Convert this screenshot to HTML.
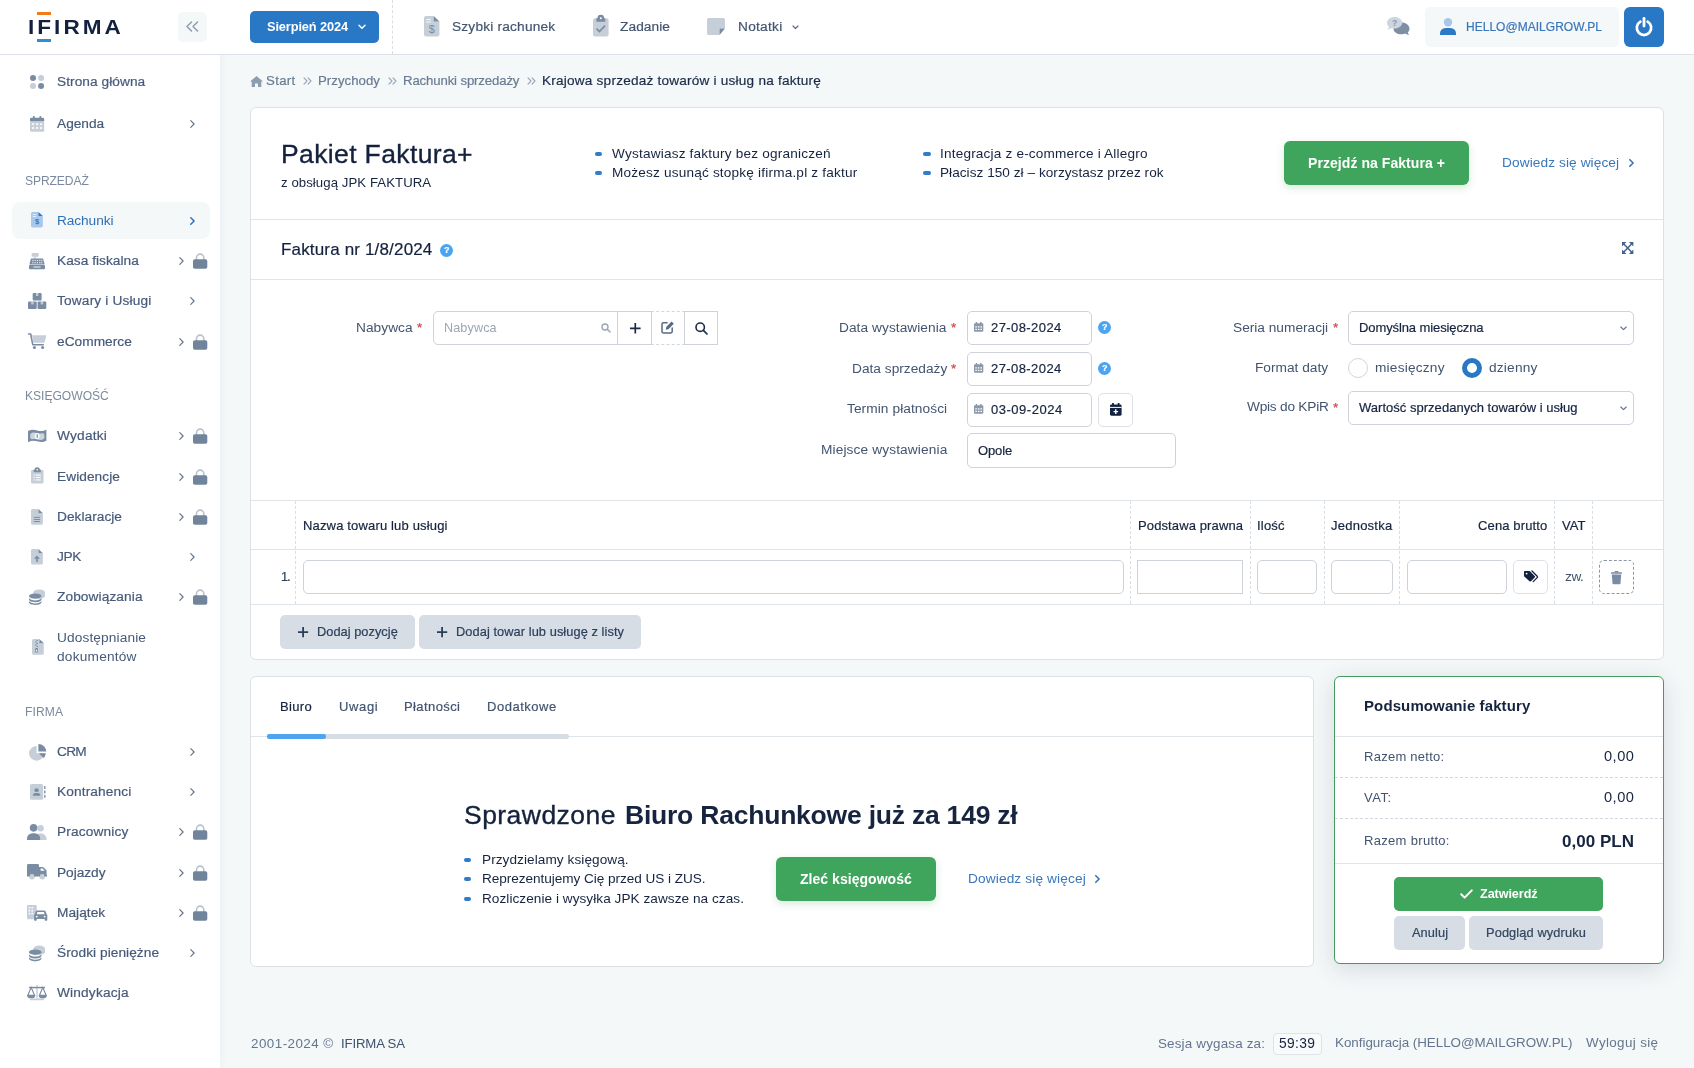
<!DOCTYPE html>
<html lang="pl"><head><meta charset="utf-8"><title>ifirma - faktura</title><style>
*{box-sizing:border-box;margin:0;padding:0}
html,body{width:1694px;height:1068px;overflow:hidden}
body{background:#f5f8f9;font-family:"Liberation Sans",sans-serif;color:#16243f;font-size:14px;position:relative}
.a{position:absolute;white-space:nowrap;will-change:transform}
.m5{-webkit-text-stroke:.2px}
.m4{-webkit-text-stroke:.35px}
.b{position:absolute}
svg{position:absolute;overflow:visible}
aside,header,nav,main,section,footer{display:block;position:static;height:0}
.card{position:absolute;background:#fff;border:1px solid #dde1e6;border-radius:6px}
.hl{position:absolute;height:1px;background:#dfe4e9}
.vd{position:absolute;width:0;border-left:1px dashed #d9dee4}
.inp{position:absolute;background:#fff;border:1px solid #cdd3d9;border-radius:5px}
</style></head><body>
<aside class="sidebar">
<div class="b" style="left:0;top:0;width:220px;height:1068px;background:#fff;box-shadow:0 0 10px rgba(40,60,90,.05)"></div>
<div class="b" style="left:220px;top:0;width:1474px;height:54px;background:#fff"></div>
<div class="hl" style="left:0;top:54px;width:1694px;background:#dce2e8"></div>
<div class="b" style="left:37px;top:11.700px;width:13.700px;height:3px;background:#ee7d1a"></div>
<div class="b" style="left:37px;top:38.700px;width:13.700px;height:3px;background:#2c8fd6"></div>
<div class="a" style="top:16.3px;line-height:22px;font-size:19.8px;color:#12213f;font-weight:700;letter-spacing:2.662px;left:28.3px;transform:scaleX(1.14);transform-origin:0 50%;">IFIRMA</div>
<div class="b" style="left:177.500px;top:12px;width:29.500px;height:30px;background:#f5f8f9;border-radius:5px"></div>
<svg style="left:186px;top:21px" width="13" height="11" viewBox="0 0 13 11"><path d="M5.500 1L1 5.500L5.500 10M11.500 1L7 5.500L11.500 10" fill="none" stroke="#8d9cb0" stroke-width="1.500" stroke-linecap="round" stroke-linejoin="round"/></svg>
<div class="b" style="left:12px;top:202px;width:198px;height:37px;background:#f5f8f9;border-radius:8px"></div>
<svg style="left:31.2px;top:212.3px" width="12.3" height="15.4" viewBox="0 0 14 18" preserveAspectRatio="none"><path d="M0 1.8A1.8 1.8 0 0 1 1.8 0H8.5V4.8H13.5V16.2A1.8 1.8 0 0 1 11.7 18H1.8A1.8 1.8 0 0 1 0 16.2z" fill="#a9c7ea"/><path d="M8.5 0L13.5 4.8H8.5z" fill="#2c79c7"/><text x="6.8" y="14.6" font-size="8.5" font-weight="700" fill="#2c79c7" text-anchor="middle" font-family="Liberation Sans,sans-serif">$</text><rect x="2" y="2.6" width="4" height="1" fill="#fff" opacity=".8"/><rect x="2" y="4.8" width="4" height="1" fill="#fff" opacity=".8"/></svg>
<div class="a" style="top:211px;line-height:20px;font-size:13.7px;color:#2f6fb6;letter-spacing:-0.083px;left:57px;">Rachunki</div>
<svg style="left:190px;top:216.5px" width="5" height="8" viewBox="0 0 5 8"><path d="M.800 .700L4.100 4L.800 7.300" fill="none" stroke="#2c6fba" stroke-width="1.5" stroke-linecap="round" stroke-linejoin="round"/></svg>
<svg style="left:30.1px;top:74.9px" width="14.1" height="13.9" viewBox="0 0 14 14" preserveAspectRatio="none"><circle cx="3" cy="3" r="3" fill="#7a8ca3"/><circle cx="11" cy="3" r="3" fill="#c6ced8"/><circle cx="3" cy="11" r="3" fill="#c6ced8"/><circle cx="11" cy="11" r="3" fill="#7a8ca3"/></svg>
<div class="a m5" style="top:72px;line-height:20px;font-size:13.7px;color:#465a7a;letter-spacing:0.06px;left:57px;">Strona główna</div>
<svg style="left:30.2px;top:116.1px" width="14.2" height="15.7" viewBox="0 0 16 18" preserveAspectRatio="none"><rect x="0" y="6" width="16" height="12" rx="1.5" fill="#c6ced8"/><path d="M0 3.5a1.5 1.5 0 0 1 1.5-1.5H14.5A1.5 1.5 0 0 1 16 3.5V6H0z" fill="#7a8ca3"/><rect x="3.2" y="0" width="2.2" height="4" rx="1" fill="#7a8ca3"/><rect x="10.6" y="0" width="2.2" height="4" rx="1" fill="#7a8ca3"/><rect x="2.2" y="8.2" width="2.6" height="2.4" fill="#fff" opacity=".75"/><rect x="6.7" y="8.2" width="2.6" height="2.4" fill="#fff" opacity=".75"/><rect x="11.2" y="8.2" width="2.6" height="2.4" fill="#fff" opacity=".75"/><rect x="2.2" y="12.6" width="2.6" height="2.4" fill="#fff" opacity=".75"/><rect x="6.7" y="12.6" width="2.6" height="2.4" fill="#fff" opacity=".75"/><rect x="11.2" y="12.6" width="2.6" height="2.4" fill="#fff" opacity=".75"/></svg>
<div class="a m5" style="top:114px;line-height:20px;font-size:13.7px;color:#465a7a;letter-spacing:-0.001px;left:57px;">Agenda</div>
<svg style="left:190px;top:119.6px" width="5" height="8" viewBox="0 0 5 8"><path d="M.800 .700L4.100 4L.800 7.300" fill="none" stroke="#64768d" stroke-width="1.2" stroke-linecap="round" stroke-linejoin="round"/></svg>
<svg style="left:29px;top:252.7px" width="16" height="16.2" viewBox="0 0 18 16" preserveAspectRatio="none"><rect x="3" y="0" width="8" height="3.6" rx=".8" fill="#c6ced8"/><rect x="6" y="3.6" width="2" height="2" fill="#c6ced8"/><path d="M2.2 5.4H15.8L17.6 11.4H.4z" fill="#7a8ca3"/><rect x="0" y="11.8" width="18" height="4.2" rx="1" fill="#7a8ca3"/><rect x="3.6" y="6.8" width="1.4" height="1.2" fill="#fff" opacity=".8"/><rect x="6.2" y="6.8" width="1.4" height="1.2" fill="#fff" opacity=".8"/><rect x="8.8" y="6.8" width="1.4" height="1.2" fill="#fff" opacity=".8"/><rect x="11.4" y="6.8" width="1.4" height="1.2" fill="#fff" opacity=".8"/><rect x="13.6" y="6.8" width="1.4" height="1.2" fill="#fff" opacity=".8"/><rect x="3.6" y="9" width="1.4" height="1.2" fill="#fff" opacity=".8"/><rect x="6.2" y="9" width="1.4" height="1.2" fill="#fff" opacity=".8"/><rect x="8.8" y="9" width="1.4" height="1.2" fill="#fff" opacity=".8"/><rect x="11.4" y="9" width="1.4" height="1.2" fill="#fff" opacity=".8"/><rect x="13.6" y="9" width="1.4" height="1.2" fill="#fff" opacity=".8"/><rect x="5" y="13.2" width="8" height="1.3" fill="#fff" opacity=".7"/></svg>
<div class="a m5" style="top:251px;line-height:20px;font-size:13.7px;color:#465a7a;letter-spacing:0.037px;left:57px;">Kasa fiskalna</div>
<svg style="left:178.8px;top:256.6px" width="5" height="8" viewBox="0 0 5 8"><path d="M.800 .700L4.100 4L.800 7.300" fill="none" stroke="#64768d" stroke-width="1.2" stroke-linecap="round" stroke-linejoin="round"/></svg>
<svg style="left:192.7px;top:253.2px" width="14.3" height="15.7" viewBox="0 0 14.3 15.7"><path d="M3.500 7.500V4.800a3.650 3.650 0 0 1 7.300 0V7.500" fill="none" stroke="#b7c1cd" stroke-width="1.600"/><rect x="0" y="6.200" width="14.300" height="9.500" rx="1.800" fill="#70849c"/></svg>
<svg style="left:27.8px;top:292.9px" width="18.3" height="16" viewBox="0 0 18 16" preserveAspectRatio="none"><rect x="4.6" y="0" width="8.8" height="7.4" rx="1" fill="#7a8ca3"/><rect x="7.8" y="0" width="2.4" height="3" fill="#fff" opacity=".55"/><rect x="0" y="8.4" width="8.6" height="7.6" rx="1" fill="#7a8ca3"/><rect x="3.1" y="8.4" width="2.4" height="3" fill="#fff" opacity=".55"/><rect x="9.4" y="8.4" width="8.6" height="7.6" rx="1" fill="#7a8ca3"/><rect x="12.5" y="8.4" width="2.4" height="3" fill="#fff" opacity=".55"/></svg>
<div class="a m5" style="top:291px;line-height:20px;font-size:13.7px;color:#465a7a;letter-spacing:0.17px;left:57px;">Towary i Usługi</div>
<svg style="left:190px;top:296.6px" width="5" height="8" viewBox="0 0 5 8"><path d="M.800 .700L4.100 4L.800 7.300" fill="none" stroke="#64768d" stroke-width="1.2" stroke-linecap="round" stroke-linejoin="round"/></svg>
<svg style="left:27.8px;top:333px" width="18.4" height="16" viewBox="0 0 18 16" preserveAspectRatio="none"><path d="M0 .2H2.6a.8.8 0 0 1 .8.65L5.3 11h10.2v1.5H4.7a.8.8 0 0 1-.78-.65L1.95 1.7H0z" fill="#7a8ca3"/><path d="M3.9 2.2H17.3a.6.6 0 0 1 .58.75L16.3 9.1a.8.8 0 0 1-.77.6H5.3z" fill="#c6ced8"/><circle cx="6.3" cy="14.5" r="1.5" fill="#7a8ca3"/><circle cx="14.3" cy="14.5" r="1.5" fill="#7a8ca3"/></svg>
<div class="a m5" style="top:332px;line-height:20px;font-size:13.7px;color:#465a7a;letter-spacing:0.039px;left:57px;">eCommerce</div>
<svg style="left:178.8px;top:337.6px" width="5" height="8" viewBox="0 0 5 8"><path d="M.800 .700L4.100 4L.800 7.300" fill="none" stroke="#64768d" stroke-width="1.2" stroke-linecap="round" stroke-linejoin="round"/></svg>
<svg style="left:192.7px;top:334.2px" width="14.3" height="15.7" viewBox="0 0 14.3 15.7"><path d="M3.500 7.500V4.800a3.650 3.650 0 0 1 7.300 0V7.500" fill="none" stroke="#b7c1cd" stroke-width="1.600"/><rect x="0" y="6.200" width="14.300" height="9.500" rx="1.800" fill="#70849c"/></svg>
<svg style="left:27.8px;top:429.1px" width="18.4" height="13.8" viewBox="0 0 18 13" preserveAspectRatio="none"><path d="M0 2C3 .4 6 .6 9 1.400s6 .8 9-1V11c-3 1.600-6 1.400-9 .6S3 10.800 0 12.400z" fill="#7a8ca3"/><path d="M3.600 3.700C5.400 3.200 7.200 3.400 9 3.900s3.800.6 5.600-.2L16 5.200V8.600l-1.400 1.300c-1.800.6-3.800.4-5.600-.1s-3.600-.6-5.400-.1L2.200 8.400V5z" fill="#cdd5de"/><ellipse cx="9" cy="6.600" rx="2.300" ry="2.800" fill="#fff"/><rect x="8.400" y="4.900" width="1.300" height="3.400" rx=".4" fill="#7a8ca3"/></svg>
<div class="a m5" style="top:426px;line-height:20px;font-size:13.7px;color:#465a7a;letter-spacing:0.22px;left:57px;">Wydatki</div>
<svg style="left:178.8px;top:431.6px" width="5" height="8" viewBox="0 0 5 8"><path d="M.800 .700L4.100 4L.800 7.300" fill="none" stroke="#64768d" stroke-width="1.2" stroke-linecap="round" stroke-linejoin="round"/></svg>
<svg style="left:192.7px;top:428.2px" width="14.3" height="15.7" viewBox="0 0 14.3 15.7"><path d="M3.500 7.500V4.800a3.650 3.650 0 0 1 7.300 0V7.500" fill="none" stroke="#b7c1cd" stroke-width="1.600"/><rect x="0" y="6.200" width="14.300" height="9.500" rx="1.800" fill="#70849c"/></svg>
<svg style="left:31.2px;top:468.1px" width="12.5" height="15.6" viewBox="0 0 14 18" preserveAspectRatio="none"><rect x="0" y="2" width="14" height="16" rx="1.8" fill="#c6ced8"/><path d="M4 2a3 3 0 0 1 6 0h1v3H3V2z" fill="#7a8ca3"/><circle cx="7" cy="2" r=".9" fill="#fff"/><rect x="3" y="7.6" width="1.3" height="1.2" fill="#fff"/><rect x="5.4" y="7.6" width="5.6" height="1.2" fill="#fff"/><rect x="3" y="10.4" width="1.3" height="1.2" fill="#fff"/><rect x="5.4" y="10.4" width="5.6" height="1.2" fill="#fff"/><rect x="3" y="13.2" width="1.3" height="1.2" fill="#fff"/><rect x="5.4" y="13.2" width="5.6" height="1.2" fill="#fff"/></svg>
<div class="a m5" style="top:467px;line-height:20px;font-size:13.7px;color:#465a7a;letter-spacing:0.057px;left:57px;">Ewidencje</div>
<svg style="left:178.8px;top:472.6px" width="5" height="8" viewBox="0 0 5 8"><path d="M.800 .700L4.100 4L.800 7.300" fill="none" stroke="#64768d" stroke-width="1.2" stroke-linecap="round" stroke-linejoin="round"/></svg>
<svg style="left:192.7px;top:469.2px" width="14.3" height="15.7" viewBox="0 0 14.3 15.7"><path d="M3.500 7.500V4.800a3.650 3.650 0 0 1 7.300 0V7.500" fill="none" stroke="#b7c1cd" stroke-width="1.600"/><rect x="0" y="6.200" width="14.300" height="9.500" rx="1.800" fill="#70849c"/></svg>
<svg style="left:31.2px;top:509.1px" width="12.3" height="15.8" viewBox="0 0 14 18" preserveAspectRatio="none"><path d="M0 1.8A1.8 1.8 0 0 1 1.8 0H8.5V4.8H13.5V16.2A1.8 1.8 0 0 1 11.7 18H1.8A1.8 1.8 0 0 1 0 16.2z" fill="#c6ced8"/><path d="M8.5 0L13.5 4.8H8.5z" fill="#7a8ca3"/><rect x="3.2" y="9" width="7.200" height="1.100" fill="#7a8ca3"/><rect x="3.2" y="11.4" width="7.200" height="1.100" fill="#7a8ca3"/><rect x="3.2" y="13.8" width="7.200" height="1.100" fill="#7a8ca3"/></svg>
<div class="a m5" style="top:507px;line-height:20px;font-size:13.7px;color:#465a7a;letter-spacing:0.033px;left:57px;">Deklaracje</div>
<svg style="left:178.8px;top:512.6px" width="5" height="8" viewBox="0 0 5 8"><path d="M.800 .700L4.100 4L.800 7.300" fill="none" stroke="#64768d" stroke-width="1.2" stroke-linecap="round" stroke-linejoin="round"/></svg>
<svg style="left:192.7px;top:509.2px" width="14.3" height="15.7" viewBox="0 0 14.3 15.7"><path d="M3.500 7.500V4.800a3.650 3.650 0 0 1 7.300 0V7.500" fill="none" stroke="#b7c1cd" stroke-width="1.600"/><rect x="0" y="6.200" width="14.300" height="9.500" rx="1.800" fill="#70849c"/></svg>
<svg style="left:31.2px;top:549.2px" width="12.3" height="15.5" viewBox="0 0 14 18" preserveAspectRatio="none"><path d="M0 1.8A1.8 1.8 0 0 1 1.8 0H8.5V4.8H13.5V16.2A1.8 1.8 0 0 1 11.7 18H1.8A1.8 1.8 0 0 1 0 16.2z" fill="#c6ced8"/><path d="M8.5 0L13.5 4.8H8.5z" fill="#7a8ca3"/><path d="M6.8 7.600L10.200 11.200H7.700V15H5.900V11.200H3.400z" fill="#7a8ca3"/></svg>
<div class="a m5" style="top:547px;line-height:20px;font-size:13.7px;color:#465a7a;letter-spacing:-0.403px;left:57px;">JPK</div>
<svg style="left:190px;top:552.6px" width="5" height="8" viewBox="0 0 5 8"><path d="M.800 .700L4.100 4L.800 7.300" fill="none" stroke="#64768d" stroke-width="1.2" stroke-linecap="round" stroke-linejoin="round"/></svg>
<svg style="left:29px;top:589px" width="16" height="16" viewBox="0 0 18 18" preserveAspectRatio="none"><ellipse cx="11.500" cy="3.800" rx="6.500" ry="3.200" fill="#c6ced8"/><path d="M5 3.800V8h13V3.800z" fill="#c6ced8"/><ellipse cx="11.500" cy="8" rx="6.500" ry="3" fill="#c6ced8"/><ellipse cx="7" cy="8" rx="7" ry="3" fill="#7a8ca3"/><path d="M0 10.200c1 1.800 3.800 2.700 7 2.700s6-.9 7-2.700v1.700c0 1.700-3.100 3-7 3s-7-1.300-7-3z" fill="#7a8ca3"/><path d="M0 13.600c1 1.800 3.800 2.700 7 2.700s6-.9 7-2.700V15c0 1.700-3.100 3-7 3s-7-1.300-7-3z" fill="#7a8ca3"/></svg>
<div class="a m5" style="top:587px;line-height:20px;font-size:13.7px;color:#465a7a;letter-spacing:0.094px;left:57px;">Zobowiązania</div>
<svg style="left:178.8px;top:592.6px" width="5" height="8" viewBox="0 0 5 8"><path d="M.800 .700L4.100 4L.800 7.300" fill="none" stroke="#64768d" stroke-width="1.2" stroke-linecap="round" stroke-linejoin="round"/></svg>
<svg style="left:192.7px;top:589.2px" width="14.3" height="15.7" viewBox="0 0 14.3 15.7"><path d="M3.500 7.500V4.800a3.650 3.650 0 0 1 7.300 0V7.500" fill="none" stroke="#b7c1cd" stroke-width="1.600"/><rect x="0" y="6.200" width="14.300" height="9.500" rx="1.800" fill="#70849c"/></svg>
<svg style="left:29px;top:743.7px" width="17.2" height="16.5" viewBox="0 0 18 18" preserveAspectRatio="none"><path d="M8 2.200V10.200H16A8 8 0 1 1 8 2.200z" fill="#c6ced8"/><path d="M9.800 0A8.200 8.200 0 0 1 18 8.200H9.800z" fill="#7a8ca3"/><path d="M10.200 10.200H17.600A8 8 0 0 1 15.400 15.300z" fill="#7a8ca3"/></svg>
<div class="a m5" style="top:742px;line-height:20px;font-size:13.7px;color:#465a7a;letter-spacing:-0.757px;left:57px;">CRM</div>
<svg style="left:190px;top:747.6px" width="5" height="8" viewBox="0 0 5 8"><path d="M.800 .700L4.100 4L.800 7.300" fill="none" stroke="#64768d" stroke-width="1.2" stroke-linecap="round" stroke-linejoin="round"/></svg>
<svg style="left:30px;top:784.1px" width="15.5" height="15.8" viewBox="0 0 16 18" preserveAspectRatio="none"><rect x="0" y="0" width="13.600" height="18" rx="1.800" fill="#c6ced8"/><circle cx="6.800" cy="7" r="2.200" fill="#7a8ca3"/><path d="M2.900 13.300a3 3 0 0 1 3-3h1.800a3 3 0 0 1 3 3z" fill="#7a8ca3"/><rect x="14.600" y="2.2" width="1.400" height="3.400" rx=".5" fill="#7a8ca3"/><rect x="14.600" y="7.3" width="1.400" height="3.400" rx=".5" fill="#7a8ca3"/><rect x="14.600" y="12.4" width="1.400" height="3.400" rx=".5" fill="#7a8ca3"/></svg>
<div class="a m5" style="top:782px;line-height:20px;font-size:13.7px;color:#465a7a;letter-spacing:0.122px;left:57px;">Kontrahenci</div>
<svg style="left:190px;top:787.6px" width="5" height="8" viewBox="0 0 5 8"><path d="M.800 .700L4.100 4L.800 7.300" fill="none" stroke="#64768d" stroke-width="1.2" stroke-linecap="round" stroke-linejoin="round"/></svg>
<svg style="left:27px;top:823.8px" width="20" height="16.1" viewBox="0 0 20 16" preserveAspectRatio="none"><circle cx="13.600" cy="4.200" r="3.200" fill="#c6ced8"/><path d="M8 15a5.600 5.600 0 0 1 11.600 0v1H8z" fill="#c6ced8"/><circle cx="6.600" cy="3.800" r="3.800" fill="#7a8ca3"/><path d="M0 14.600a5.400 5.400 0 0 1 5.400-5.400h2.400a5.400 5.400 0 0 1 5.400 5.400V16H0z" fill="#7a8ca3"/></svg>
<div class="a m5" style="top:822px;line-height:20px;font-size:13.7px;color:#465a7a;letter-spacing:0.142px;left:57px;">Pracownicy</div>
<svg style="left:178.8px;top:827.6px" width="5" height="8" viewBox="0 0 5 8"><path d="M.800 .700L4.100 4L.800 7.300" fill="none" stroke="#64768d" stroke-width="1.2" stroke-linecap="round" stroke-linejoin="round"/></svg>
<svg style="left:192.7px;top:824.2px" width="14.3" height="15.7" viewBox="0 0 14.3 15.7"><path d="M3.500 7.500V4.800a3.650 3.650 0 0 1 7.300 0V7.500" fill="none" stroke="#b7c1cd" stroke-width="1.600"/><rect x="0" y="6.200" width="14.300" height="9.500" rx="1.800" fill="#70849c"/></svg>
<svg style="left:27px;top:863.8px" width="20" height="15.9" viewBox="0 0 20 16" preserveAspectRatio="none"><rect x="0" y="0" width="12" height="11.600" rx="1.400" fill="#7a8ca3"/><path d="M12 3h3.600a1.400 1.400 0 0 1 1 .4l2.600 2.700a1.400 1.400 0 0 1 .4 1V11.600H12z" fill="#7a8ca3"/><path d="M13.600 4.600h2l2 2.200h-4z" fill="#fff"/><circle cx="5" cy="12.800" r="2.700" fill="#c6ced8"/><circle cx="15.200" cy="12.800" r="2.700" fill="#c6ced8"/><rect x="0" y="11" width="20" height="1.600" fill="#7a8ca3"/><circle cx="5" cy="12.800" r="2.400" fill="#c6ced8"/><circle cx="15.200" cy="12.800" r="2.400" fill="#c6ced8"/></svg>
<div class="a m5" style="top:863px;line-height:20px;font-size:13.7px;color:#465a7a;letter-spacing:-0.029px;left:57px;">Pojazdy</div>
<svg style="left:178.8px;top:868.6px" width="5" height="8" viewBox="0 0 5 8"><path d="M.800 .700L4.100 4L.800 7.300" fill="none" stroke="#64768d" stroke-width="1.2" stroke-linecap="round" stroke-linejoin="round"/></svg>
<svg style="left:192.7px;top:865.2px" width="14.3" height="15.7" viewBox="0 0 14.3 15.7"><path d="M3.500 7.500V4.800a3.650 3.650 0 0 1 7.300 0V7.500" fill="none" stroke="#b7c1cd" stroke-width="1.600"/><rect x="0" y="6.200" width="14.300" height="9.500" rx="1.800" fill="#70849c"/></svg>
<svg style="left:27px;top:905px" width="20.3" height="15.7" viewBox="0 0 20 16" preserveAspectRatio="none"><rect x="0" y="0" width="9.600" height="14.600" rx="1" fill="#c6ced8"/><rect x="1.6" y="2" width="1.600" height="1.600" fill="#fff"/><rect x="4.4" y="2" width="1.600" height="1.600" fill="#fff"/><rect x="1.6" y="5" width="1.600" height="1.600" fill="#fff"/><rect x="4.4" y="5" width="1.600" height="1.600" fill="#fff"/><rect x="1.6" y="8" width="1.600" height="1.600" fill="#fff"/><rect x="4.4" y="8" width="1.600" height="1.600" fill="#fff"/><path d="M8.600 6.600a1.600 1.600 0 0 1 1.500-1.100h6.800a1.600 1.600 0 0 1 1.500 1.100l1 2.900c.4.300.6.700.6 1.200V15.200a.8.800 0 0 1-.8.800h-1a.8.800 0 0 1-.8-.8V14.400H9.600v.8a.8.800 0 0 1-.8.800h-1A.8.800 0 0 1 7 15.200V10.700c0-.5.200-.9.600-1.200z" fill="#7a8ca3"/><path d="M10.300 7.200h6.400l.7 2.200h-7.800z" fill="#fff"/><circle cx="9.600" cy="11.800" r=".9" fill="#fff"/><circle cx="17.400" cy="11.800" r=".9" fill="#fff"/></svg>
<div class="a m5" style="top:903px;line-height:20px;font-size:13.7px;color:#465a7a;letter-spacing:0.038px;left:57px;">Majątek</div>
<svg style="left:178.8px;top:908.6px" width="5" height="8" viewBox="0 0 5 8"><path d="M.800 .700L4.100 4L.800 7.300" fill="none" stroke="#64768d" stroke-width="1.2" stroke-linecap="round" stroke-linejoin="round"/></svg>
<svg style="left:192.7px;top:905.2px" width="14.3" height="15.7" viewBox="0 0 14.3 15.7"><path d="M3.500 7.500V4.800a3.650 3.650 0 0 1 7.300 0V7.500" fill="none" stroke="#b7c1cd" stroke-width="1.600"/><rect x="0" y="6.200" width="14.300" height="9.500" rx="1.800" fill="#70849c"/></svg>
<svg style="left:29px;top:944.7px" width="16" height="16.2" viewBox="0 0 18 18" preserveAspectRatio="none"><ellipse cx="11.500" cy="3.800" rx="6.500" ry="3.200" fill="#c6ced8"/><path d="M5 3.800V8h13V3.800z" fill="#c6ced8"/><ellipse cx="11.500" cy="8" rx="6.500" ry="3" fill="#c6ced8"/><ellipse cx="7" cy="8" rx="7" ry="3" fill="#7a8ca3"/><path d="M0 10.200c1 1.800 3.800 2.700 7 2.700s6-.9 7-2.700v1.700c0 1.700-3.100 3-7 3s-7-1.300-7-3z" fill="#7a8ca3"/><path d="M0 13.600c1 1.800 3.800 2.700 7 2.700s6-.9 7-2.700V15c0 1.700-3.100 3-7 3s-7-1.300-7-3z" fill="#7a8ca3"/></svg>
<div class="a m5" style="top:943px;line-height:20px;font-size:13.7px;color:#465a7a;letter-spacing:0.056px;left:57px;">Środki pieniężne</div>
<svg style="left:190px;top:948.6px" width="5" height="8" viewBox="0 0 5 8"><path d="M.800 .700L4.100 4L.800 7.300" fill="none" stroke="#64768d" stroke-width="1.2" stroke-linecap="round" stroke-linejoin="round"/></svg>
<svg style="left:27px;top:984.8px" width="20" height="15.8" viewBox="0 0 20 14" preserveAspectRatio="none"><rect x="9.300" y="0" width="1.400" height="12" fill="#c6ced8"/><rect x="3" y="12" width="14" height="1.500" rx=".7" fill="#c6ced8"/><rect x="2" y="1.600" width="16" height="1.300" fill="#7a8ca3"/><path d="M4.200 2.200L7.600 9.200H.8z" fill="none" stroke="#7a8ca3" stroke-width="1.100"/><path d="M.2 9.200H8.200A4 2.600 0 0 1 .2 9.200z" fill="#7a8ca3"/><path d="M15.800 2.200L19.200 9.200H12.400z" fill="none" stroke="#7a8ca3" stroke-width="1.100"/><path d="M11.800 9.200H19.800A4 2.600 0 0 1 11.800 9.200z" fill="#7a8ca3"/></svg>
<div class="a m5" style="top:983px;line-height:20px;font-size:13.7px;color:#465a7a;letter-spacing:0.172px;left:57px;">Windykacja</div>
<svg style="left:31.7px;top:639.1px" width="11.8" height="15.8" viewBox="0 0 12 16" preserveAspectRatio="none"><path d="M0 1.600A1.600 1.600 0 0 1 1.600 0H7.500V4.300H12V14.400A1.600 1.600 0 0 1 10.400 16H1.600A1.600 1.600 0 0 1 0 14.400z" fill="#c6ced8"/><path d="M7.500 0L12 4.300H7.500z" fill="#7a8ca3"/><rect x="4.6" y="1.0" width="1.400" height="1.100" fill="#7a8ca3"/><rect x="3.2" y="2.5" width="1.400" height="1.100" fill="#7a8ca3"/><rect x="4.6" y="4.0" width="1.400" height="1.100" fill="#7a8ca3"/><rect x="3.2" y="5.5" width="1.400" height="1.100" fill="#7a8ca3"/><rect x="4.6" y="7.0" width="1.400" height="1.100" fill="#7a8ca3"/><rect x="3.200" y="9" width="2.800" height="4.600" rx=".8" fill="#7a8ca3"/><rect x="4" y="11" width="1.200" height="1.600" fill="#fff"/></svg>
<div class="a" style="top:628.2px;line-height:20px;font-size:13.7px;color:#465a7a;letter-spacing:0.122px;left:57px;">Udostępnianie</div>
<div class="a" style="top:647.2px;line-height:20px;font-size:13.7px;color:#465a7a;letter-spacing:0.209px;left:57px;">dokumentów</div>
<div class="a" style="top:170.8px;line-height:20px;font-size:12.1px;color:#7b8a9e;letter-spacing:-0.102px;left:24.5px;">SPRZEDAŻ</div>
<div class="a" style="top:385.5px;line-height:20px;font-size:12.1px;color:#7b8a9e;letter-spacing:-0.02px;left:24.5px;">KSIĘGOWOŚĆ</div>
<div class="a" style="top:701.5px;line-height:20px;font-size:12.1px;color:#7b8a9e;letter-spacing:0.095px;left:24.5px;">FIRMA</div>
</aside>
<header class="topbar">
<div class="b" style="left:250px;top:11px;width:129px;height:32px;background:#2878c6;border-radius:5px"></div>
<div class="a" style="top:17px;line-height:20px;font-size:12.8px;color:#fff;font-weight:700;letter-spacing:-0.118px;left:267px;">Sierpień 2024</div>
<svg style="left:358px;top:24px" width="8" height="6" viewBox="0 0 8 6"><path d="M1 1.200L4 4.200L7 1.200" fill="none" stroke="#fff" stroke-width="1.500" stroke-linecap="round" stroke-linejoin="round"/></svg>
<div class="vd" style="left:392px;top:0;height:54px"></div>
<svg style="left:424.2px;top:16px" width="16" height="20.5" viewBox="0 0 14 18" preserveAspectRatio="none"><path d="M0 1.8A1.8 1.8 0 0 1 1.8 0H8.5V4.8H13.5V16.2A1.8 1.8 0 0 1 11.7 18H1.8A1.8 1.8 0 0 1 0 16.2z" fill="#c6ced8"/><path d="M8.5 0L13.5 4.8H8.5z" fill="#7a8ca3"/><text x="6.8" y="14.8" font-size="9.5" fill="#7a8ca3" text-anchor="middle" font-family="Liberation Sans,sans-serif">$</text><rect x="2" y="2.6" width="4" height="1" fill="#fff" opacity=".8"/><rect x="2" y="4.8" width="4" height="1" fill="#fff" opacity=".8"/></svg>
<div class="a m5" style="top:17.3px;line-height:20px;font-size:13.7px;color:#42546f;letter-spacing:0.198px;left:451.5px;">Szybki rachunek</div>
<svg style="left:592.8px;top:16px" width="15.6" height="20.5" viewBox="0 0 14 18" preserveAspectRatio="none"><rect x="0" y="2" width="14" height="16" rx="1.800" fill="#c6ced8"/><path d="M4 2a3 3 0 0 1 6 0h1v3H3V2z" fill="#7a8ca3"/><circle cx="7" cy="2" r=".9" fill="#fff"/><path d="M3.200 11L5.800 13.600L10.800 8.400" fill="none" stroke="#7a8ca3" stroke-width="1.500"/></svg>
<div class="a m5" style="top:17.3px;line-height:20px;font-size:13.7px;color:#42546f;letter-spacing:0.076px;left:619.5px;">Zadanie</div>
<svg style="left:707px;top:18px" width="18" height="17" viewBox="0 0 18 17"><path d="M0 1.800A1.800 1.800 0 0 1 1.800 0H16.200A1.800 1.800 0 0 1 18 1.800V10.500H12.500V17H1.800A1.800 1.800 0 0 1 0 15.200z" fill="#c6ced8"/><path d="M18 10.500L12.500 17V10.500z" fill="#7a8ca3"/></svg>
<div class="a m5" style="top:17.3px;line-height:20px;font-size:13.7px;color:#42546f;letter-spacing:0.27px;left:738px;">Notatki</div>
<svg style="left:792px;top:25px" width="7" height="5" viewBox="0 0 7 5"><path d="M1 1L3.500 3.500L6 1" fill="none" stroke="#5d6f86" stroke-width="1.200" stroke-linecap="round" stroke-linejoin="round"/></svg>
<svg style="left:1386.8px;top:17px" width="24" height="19" viewBox="0 0 24 19"><path d="M14.500 5.500c4.400 0 8 2.700 8 6.200 0 1.500-.7 2.800-1.800 3.900.3 1.200 1.300 2.200 1.300 2.300-1.700 0-3-.8-3.700-1.300-1.100.4-2.400.7-3.800.7-4.400 0-8-2.500-8-5.600s3.600-6.200 8-6.200z" fill="#7f8fa3"/><path d="M7.600 0c4.200 0 7.600 2.600 7.600 5.800s-3.400 5.800-7.600 5.800c-1.100 0-2.200-.2-3.100-.5C3.700 11.700 2.300 12.500.4 12.500c0-.1 1.200-1.100 1.600-2.400C.8 9 0 7.500 0 5.800 0 2.600 3.400 0 7.600 0z" fill="#cdd5de"/><text x="7.700" y="9" font-size="8.500" font-weight="700" fill="#8a9ab8" text-anchor="middle" font-family="Liberation Sans,sans-serif">?</text></svg>
<div class="b" style="left:1424.500px;top:7px;width:194px;height:40px;background:#f5f8f9;border-radius:5px"></div>
<svg style="left:1440px;top:18px" width="16" height="17" viewBox="0 0 16 17"><circle cx="8" cy="4.200" r="4.200" fill="#a9c7ea"/><path d="M0 15.500A5.500 5.500 0 0 1 5.500 10h5A5.500 5.500 0 0 1 16 15.500V17H0z" fill="#2c79c7"/></svg>
<div class="a m5" style="top:17.2px;line-height:20px;font-size:12px;color:#3a76ba;letter-spacing:0.026px;left:1465.5px;">HELLO@MAILGROW.PL</div>
<div class="b" style="left:1624px;top:7px;width:40px;height:40px;background:#2878c6;border-radius:6px"></div>
<svg style="left:1635px;top:17px" width="18" height="19" viewBox="0 0 18 19"><path d="M5.400 4.600A7.200 7.200 0 1 0 12.600 4.600" fill="none" stroke="#fff" stroke-width="2.700" stroke-linecap="round"/><path d="M9 1.300V9" stroke="#fff" stroke-width="2.800" stroke-linecap="round"/></svg>
</header>
<nav class="breadcrumb">
<svg style="left:250px;top:75.5px" width="13" height="11" viewBox="0 0 13 11"><path d="M6.500 0L13 5.600H11.300V11H8V7.400H5V11H1.700V5.600H0z" fill="#8d9cb0"/></svg>
<div class="a m5" style="top:71.2px;line-height:20px;font-size:13.2px;color:#6a7b92;letter-spacing:0.348px;left:266px;">Start</div>
<svg style="left:303px;top:77px" width="9" height="8" viewBox="0 0 9 8"><path d="M1 .800L4 4L1 7.200M5 .800L8 4L5 7.200" fill="none" stroke="#98a5b6" stroke-width="1.150" stroke-linecap="round" stroke-linejoin="round"/></svg>
<div class="a m5" style="top:71.2px;line-height:20px;font-size:13.2px;color:#6a7b92;letter-spacing:0.047px;left:318px;">Przychody</div>
<svg style="left:388px;top:77px" width="9" height="8" viewBox="0 0 9 8"><path d="M1 .800L4 4L1 7.200M5 .800L8 4L5 7.200" fill="none" stroke="#98a5b6" stroke-width="1.150" stroke-linecap="round" stroke-linejoin="round"/></svg>
<div class="a m5" style="top:71.2px;line-height:20px;font-size:13.2px;color:#6a7b92;letter-spacing:-0.136px;left:402.5px;">Rachunki sprzedaży</div>
<svg style="left:527px;top:77px" width="9" height="8" viewBox="0 0 9 8"><path d="M1 .800L4 4L1 7.200M5 .800L8 4L5 7.200" fill="none" stroke="#98a5b6" stroke-width="1.150" stroke-linecap="round" stroke-linejoin="round"/></svg>
<div class="a m5" style="top:71.2px;line-height:20px;font-size:13.6px;color:#1b2b47;letter-spacing:0.215px;left:541.5px;">Krajowa sprzedaż towarów i usług na fakturę</div>
</nav>
<main>
<section class="invoice-card">
<div class="card" style="left:250px;top:107px;width:1414px;height:553px"></div>
<div class="hl" style="left:251px;top:219px;width:1412px"></div>
<div class="hl" style="left:251px;top:279px;width:1412px"></div>
<div class="hl" style="left:251px;top:500px;width:1412px"></div>
<div class="hl" style="left:251px;top:549px;width:1412px"></div>
<div class="hl" style="left:251px;top:604px;width:1412px"></div>
<div class="a m4" style="top:138px;line-height:32px;font-size:26.5px;color:#14213d;letter-spacing:0.371px;left:280.5px;">Pakiet Faktura+</div>
<div class="a" style="top:172.5px;line-height:20px;font-size:13.2px;color:#16243f;letter-spacing:0.067px;left:281px;">z obsługą JPK FAKTURA</div>
<div class="b" style="left:594.5px;top:151.8px;width:7.600px;height:3.800px;border-radius:1.900px;background:#2f7cc9"></div>
<div class="a" style="top:143.5px;line-height:20px;font-size:13.6px;color:#16243f;letter-spacing:0.2px;left:612px;">Wystawiasz faktury bez ograniczeń</div>
<div class="b" style="left:594.5px;top:170.8px;width:7.600px;height:3.800px;border-radius:1.900px;background:#2f7cc9"></div>
<div class="a" style="top:162.5px;line-height:20px;font-size:13.6px;color:#16243f;letter-spacing:0.19px;left:612px;">Możesz usunąć stopkę ifirma.pl z faktur</div>
<div class="b" style="left:923.4px;top:151.8px;width:7.600px;height:3.800px;border-radius:1.900px;background:#2f7cc9"></div>
<div class="a" style="top:143.5px;line-height:20px;font-size:13.6px;color:#16243f;letter-spacing:0.181px;left:940.3px;">Integracja z e-commerce i Allegro</div>
<div class="b" style="left:923.4px;top:170.8px;width:7.600px;height:3.800px;border-radius:1.900px;background:#2f7cc9"></div>
<div class="a" style="top:162.5px;line-height:20px;font-size:13.6px;color:#16243f;letter-spacing:0.04px;left:940.3px;">Płacisz 150 zł – korzystasz przez rok</div>
<div class="b" style="left:1284px;top:141px;width:185px;height:44px;background:#40a55c;border-radius:6px;box-shadow:0 3px 8px rgba(64,165,92,.22)"></div>
<div class="a" style="top:153.3px;line-height:20px;font-size:14px;color:#fff;font-weight:700;letter-spacing:0.061px;left:1308px;">Przejdź na Faktura +</div>
<div class="a" style="top:152.5px;line-height:20px;font-size:13.7px;color:#3a76ba;letter-spacing:0.087px;left:1501.5px;">Dowiedz się więcej</div>
<svg style="left:1628.5px;top:159px" width="5" height="8" viewBox="0 0 5 8"><path d="M.800 .700L4.100 4L.800 7.300" fill="none" stroke="#3673b8" stroke-width="1.6" stroke-linecap="round" stroke-linejoin="round"/></svg>
<div class="a m5" style="top:238.8px;line-height:22px;font-size:17px;color:#14213d;letter-spacing:0.164px;left:280.5px;">Faktura nr 1/8/2024</div>
<div class="b" style="left:439.8px;top:243.5px;width:13.200px;height:13.200px;border-radius:50%;background:#4ba4f2"></div><div class="a m5" style="top:244.1px;line-height:12px;font-size:9px;color:#fff;font-weight:700;left:443.7px;">?</div>
<svg style="left:1621.8px;top:242.1px" width="11.4" height="12" viewBox="0 0 11.4 12"><path d="M0 0H4.500L0 4.500zM11.400 0V4.500L6.900 0zM0 12V7.500L4.500 12zM11.400 12H6.900L11.400 7.500z" fill="#46638a"/><path d="M1.600 1.700L9.800 10.300M9.800 1.700L1.600 10.300" stroke="#46638a" stroke-width="1.500"/></svg>
<div class="a" style="top:318px;line-height:20px;font-size:13.7px;color:#42546f;letter-spacing:0.043px;right:1281.16px;">Nabywca</div>
<div class="a m5" style="top:318.3px;line-height:20px;font-size:13.5px;color:#d2474a;left:417px;">*</div>
<div class="inp" style="left:651px;top:311px;width:34px;height:34px;border-radius:0;border-style:dashed;border-color:#d3d8de;border-left:0;border-right:0"></div>
<div class="inp" style="left:433px;top:311px;width:186px;height:34px;border-radius:5px 0 0 5px"></div>
<div class="a" style="top:318.3px;line-height:20px;font-size:12.6px;color:#9aa7b6;letter-spacing:0.129px;left:443.5px;">Nabywca</div>
<svg style="left:600.7px;top:323px" width="10" height="10" viewBox="0 0 10 10"><circle cx="4" cy="4" r="3" fill="none" stroke="#9aa7b6" stroke-width="1.400"/><path d="M6.300 6.300L9 9" stroke="#9aa7b6" stroke-width="1.600" stroke-linecap="round"/></svg>
<div class="inp" style="left:617px;top:311px;width:35px;height:34px;border-radius:0"></div>
<svg style="left:629.5px;top:322.5px" width="10.6" height="10.6" viewBox="0 0 10.6 10.6"><path d="M5.300 0V10.600M0 5.300H10.600" stroke="#1b2b47" stroke-width="1.700"/></svg>
<svg style="left:661px;top:321px" width="14" height="13" viewBox="0 0 14 13"><path d="M6 1.800H2.400A1.400 1.400 0 0 0 1 3.200V10.600A1.400 1.400 0 0 0 2.400 12H9.800A1.400 1.400 0 0 0 11.200 10.600V7" fill="none" stroke="#566a83" stroke-width="1.500" stroke-linecap="round"/><path d="M10.600 .600L12.800 2.800L7.400 8.200L4.800 8.700L5.300 6z" fill="#566a83"/></svg>
<div class="inp" style="left:684px;top:311px;width:34px;height:34px;border-radius:0"></div>
<svg style="left:695.3px;top:322px" width="13" height="13" viewBox="0 0 13 13"><circle cx="5.200" cy="5.200" r="4.200" fill="none" stroke="#1b2b47" stroke-width="1.600"/><path d="M8.400 8.400L12 12" stroke="#1b2b47" stroke-width="1.700" stroke-linecap="round"/></svg>
<div class="a" style="top:318px;line-height:20px;font-size:13.7px;color:#42546f;letter-spacing:0.062px;right:747.138px;">Data wystawienia</div>
<div class="a m5" style="top:318.3px;line-height:20px;font-size:13.5px;color:#d2474a;left:951px;">*</div>
<div class="inp" style="left:967px;top:311px;width:125px;height:34px"></div>
<svg style="left:974.4px;top:322.3px" width="9.3" height="9.8" viewBox="0 0 8.5 9" preserveAspectRatio="none"><rect x="0" y="1.100" width="8.500" height="7.900" rx="1" fill="#8b98a9"/><rect x="1.600" y="0" width="1.300" height="2" fill="#8b98a9"/><rect x="5.600" y="0" width="1.300" height="2" fill="#8b98a9"/><rect x="1.2" y="3.9" width="1.400" height="1.200" fill="#fff"/><rect x="3.55" y="3.9" width="1.400" height="1.200" fill="#fff"/><rect x="5.9" y="3.9" width="1.400" height="1.200" fill="#fff"/><rect x="1.2" y="6.2" width="1.400" height="1.200" fill="#fff"/><rect x="3.55" y="6.2" width="1.400" height="1.200" fill="#fff"/><rect x="5.9" y="6.2" width="1.400" height="1.200" fill="#fff"/></svg>
<div class="a m5" style="top:318.3px;line-height:20px;font-size:13px;color:#16243f;letter-spacing:0.42px;left:990.5px;">27-08-2024</div>
<div class="a" style="top:358.5px;line-height:20px;font-size:13.7px;color:#42546f;letter-spacing:0.014px;right:747.186px;">Data sprzedaży</div>
<div class="a m5" style="top:358.8px;line-height:20px;font-size:13.5px;color:#d2474a;left:951px;">*</div>
<div class="inp" style="left:967px;top:352px;width:125px;height:34px"></div>
<svg style="left:974.4px;top:363.3px" width="9.3" height="9.8" viewBox="0 0 8.5 9" preserveAspectRatio="none"><rect x="0" y="1.100" width="8.500" height="7.900" rx="1" fill="#8b98a9"/><rect x="1.600" y="0" width="1.300" height="2" fill="#8b98a9"/><rect x="5.600" y="0" width="1.300" height="2" fill="#8b98a9"/><rect x="1.2" y="3.9" width="1.400" height="1.200" fill="#fff"/><rect x="3.55" y="3.9" width="1.400" height="1.200" fill="#fff"/><rect x="5.9" y="3.9" width="1.400" height="1.200" fill="#fff"/><rect x="1.2" y="6.2" width="1.400" height="1.200" fill="#fff"/><rect x="3.55" y="6.2" width="1.400" height="1.200" fill="#fff"/><rect x="5.9" y="6.2" width="1.400" height="1.200" fill="#fff"/></svg>
<div class="a m5" style="top:359.3px;line-height:20px;font-size:13px;color:#16243f;letter-spacing:0.42px;left:990.5px;">27-08-2024</div>
<div class="a" style="top:399px;line-height:20px;font-size:13.7px;color:#42546f;letter-spacing:0.081px;right:747.119px;">Termin płatności</div>
<div class="inp" style="left:967px;top:393px;width:125px;height:34px"></div>
<svg style="left:974.4px;top:404.3px" width="9.3" height="9.8" viewBox="0 0 8.5 9" preserveAspectRatio="none"><rect x="0" y="1.100" width="8.500" height="7.900" rx="1" fill="#8b98a9"/><rect x="1.600" y="0" width="1.300" height="2" fill="#8b98a9"/><rect x="5.600" y="0" width="1.300" height="2" fill="#8b98a9"/><rect x="1.2" y="3.9" width="1.400" height="1.200" fill="#fff"/><rect x="3.55" y="3.9" width="1.400" height="1.200" fill="#fff"/><rect x="5.9" y="3.9" width="1.400" height="1.200" fill="#fff"/><rect x="1.2" y="6.2" width="1.400" height="1.200" fill="#fff"/><rect x="3.55" y="6.2" width="1.400" height="1.200" fill="#fff"/><rect x="5.9" y="6.2" width="1.400" height="1.200" fill="#fff"/></svg>
<div class="a m5" style="top:400.3px;line-height:20px;font-size:13px;color:#16243f;letter-spacing:0.52px;left:990.5px;">03-09-2024</div>
<div class="b" style="left:1098.3px;top:320.6px;width:13.200px;height:13.200px;border-radius:50%;background:#4ba4f2"></div><div class="a m5" style="top:321.2px;line-height:12px;font-size:9px;color:#fff;font-weight:700;left:1102.2px;">?</div>
<div class="b" style="left:1098.3px;top:361.5px;width:13.200px;height:13.200px;border-radius:50%;background:#4ba4f2"></div><div class="a m5" style="top:362.1px;line-height:12px;font-size:9px;color:#fff;font-weight:700;left:1102.2px;">?</div>
<div class="inp" style="left:1098px;top:393px;width:35px;height:34px;border-color:#dde2e8"></div>
<svg style="left:1109.8px;top:403px" width="11.6" height="12.7" viewBox="0 0 11.6 12.7"><rect x="0" y="1.500" width="11.600" height="11.200" rx="1.400" fill="#12213f"/><rect x="2.100" y="0" width="1.800" height="2.800" fill="#12213f"/><rect x="7.700" y="0" width="1.800" height="2.800" fill="#12213f"/><rect x="0" y="3.900" width="11.600" height="1" fill="#fff"/><path d="M5.800 6.300V10.900M3.500 8.600H8.100" stroke="#fff" stroke-width="1.400"/></svg>
<div class="a" style="top:440px;line-height:20px;font-size:13.7px;color:#42546f;letter-spacing:0.126px;right:747.074px;">Miejsce wystawienia</div>
<div class="inp" style="left:967px;top:433px;width:209px;height:35px"></div>
<div class="a m5" style="top:441.3px;line-height:20px;font-size:13px;color:#16243f;letter-spacing:-0.121px;left:977.5px;">Opole</div>
<div class="a" style="top:318px;line-height:20px;font-size:13.7px;color:#42546f;right:365.6px;">Seria numeracji</div>
<div class="a m5" style="top:318.3px;line-height:20px;font-size:13.5px;color:#d2474a;left:1332.5px;">*</div>
<div class="a" style="top:358px;line-height:20px;font-size:13.7px;color:#42546f;letter-spacing:0.006px;right:365.994px;">Format daty</div>
<div class="a" style="top:397.2px;line-height:20px;font-size:13.7px;color:#42546f;letter-spacing:-0.236px;right:365.836px;">Wpis do KPiR</div>
<div class="a m5" style="top:397.5px;line-height:20px;font-size:13.5px;color:#d2474a;left:1332.5px;">*</div>
<div class="inp" style="left:1348px;top:311px;width:286px;height:34px"></div>
<div class="a m5" style="top:318.3px;line-height:20px;font-size:13px;color:#16243f;letter-spacing:-0.102px;left:1359px;">Domyślna miesięczna</div>
<svg style="left:1620px;top:326px" width="7" height="5" viewBox="0 0 7 5"><path d="M.800 1L3.500 3.700L6.200 1" fill="none" stroke="#5d6f86" stroke-width="1.100" stroke-linecap="round" stroke-linejoin="round"/></svg>
<div class="inp" style="left:1348px;top:391px;width:286px;height:34px"></div>
<div class="a m5" style="top:398.3px;line-height:20px;font-size:13px;color:#16243f;letter-spacing:0.022px;left:1359px;">Wartość sprzedanych towarów i usług</div>
<svg style="left:1620px;top:406px" width="7" height="5" viewBox="0 0 7 5"><path d="M.800 1L3.500 3.700L6.200 1" fill="none" stroke="#5d6f86" stroke-width="1.100" stroke-linecap="round" stroke-linejoin="round"/></svg>
<div class="b" style="left:1348px;top:358px;width:20px;height:20px;border-radius:50%;border:1px solid #cfd6dd;background:#fff"></div>
<div class="a" style="top:358px;line-height:20px;font-size:13.7px;color:#42546f;letter-spacing:0.2px;left:1375px;">miesięczny</div>
<div class="b" style="left:1461.800px;top:358px;width:20px;height:20px;border-radius:50%;border:5.500px solid #2878c6;background:#fff"></div>
<div class="a" style="top:358px;line-height:20px;font-size:13.7px;color:#42546f;letter-spacing:0.202px;left:1489px;">dzienny</div>
<div class="vd" style="left:295px;top:501px;height:103px"></div>
<div class="vd" style="left:1130px;top:501px;height:103px"></div>
<div class="vd" style="left:1250px;top:501px;height:103px"></div>
<div class="vd" style="left:1324px;top:501px;height:103px"></div>
<div class="vd" style="left:1399px;top:501px;height:103px"></div>
<div class="vd" style="left:1554px;top:501px;height:103px"></div>
<div class="vd" style="left:1592px;top:501px;height:103px"></div>
<div class="a m5" style="top:516px;line-height:20px;font-size:13px;color:#16243f;letter-spacing:0.161px;left:303px;">Nazwa towaru lub usługi</div>
<div class="a m5" style="top:516px;line-height:20px;font-size:13px;color:#16243f;letter-spacing:0.117px;left:1138px;">Podstawa prawna</div>
<div class="a m5" style="top:516px;line-height:20px;font-size:13px;color:#16243f;letter-spacing:0.193px;left:1257px;">Ilość</div>
<div class="a m5" style="top:516px;line-height:20px;font-size:13px;color:#16243f;letter-spacing:0.237px;left:1331.3px;">Jednostka</div>
<div class="a m5" style="top:516px;line-height:20px;font-size:13px;color:#16243f;letter-spacing:0.133px;right:146.267px;">Cena brutto</div>
<div class="a m5" style="top:516px;line-height:20px;font-size:13px;color:#16243f;letter-spacing:0.014px;left:1562px;">VAT</div>
<div class="a m5" style="top:566.8px;line-height:20px;font-size:12.8px;color:#2c3e5a;letter-spacing:-1.044px;left:280.5px;">1.</div>
<div class="inp" style="left:303px;top:560px;width:821px;height:34px"></div>
<div class="inp" style="left:1137px;top:560px;width:106px;height:34px;border-radius:0"></div>
<div class="inp" style="left:1257px;top:560px;width:60px;height:34px"></div>
<div class="inp" style="left:1331px;top:560px;width:62px;height:34px"></div>
<div class="inp" style="left:1407px;top:560px;width:100px;height:34px"></div>
<div class="inp" style="left:1513px;top:560px;width:35px;height:34px;border-color:#dde2e8"></div>
<svg style="left:1524.2px;top:571px" width="13.4" height="12" viewBox="0 0 13.4 12"><path d="M0 .800A.800.800 0 0 1 .800 0H5.300a1 1 0 0 1 .7.300L10.700 5a1 1 0 0 1 0 1.400L6.900 10.200a1 1 0 0 1-1.400 0L.300 5.600A1 1 0 0 1 0 4.900z" fill="#12213f"/><circle cx="2.600" cy="2.600" r=".9" fill="#fff"/><path d="M8 0L13.200 5.200a1 1 0 0 1 0 1.400L9.200 10.600" fill="none" stroke="#12213f" stroke-width="1.300" stroke-linecap="round"/></svg>
<div class="a" style="top:566.9px;line-height:20px;font-size:13.6px;color:#42546f;letter-spacing:-0.414px;left:1564.5px;">zw.</div>
<div class="inp" style="left:1599px;top:560px;width:35px;height:34px;border:1px dashed #8a97a8;border-radius:5px"></div>
<svg style="left:1611.2px;top:570.7px" width="11" height="13.3" viewBox="0 0 11 13.3"><path d="M.8 3.400H10.200L9.500 12.300A1 1 0 0 1 8.500 13.300H2.500A1 1 0 0 1 1.500 12.300z" fill="#7a8ca3"/><rect x="0" y="1.300" width="11" height="1.500" rx=".5" fill="#7a8ca3"/><rect x="3.600" y="0" width="3.800" height="1.600" rx=".5" fill="#7a8ca3"/></svg>
<div class="b" style="left:280px;top:615px;width:135px;height:34px;background:#d6dde5;border-radius:5px"></div>
<svg style="left:298px;top:626.5px" width="10.2" height="10.2" viewBox="0 0 10.2 10.2"><path d="M5.100 0V10.200M0 5.100H10.200" stroke="#2c3e5a" stroke-width="1.800"/></svg>
<div class="a m5" style="top:621.9px;line-height:20px;font-size:12.8px;color:#2c3e5a;letter-spacing:0.031px;left:317px;">Dodaj pozycję</div>
<div class="b" style="left:419px;top:615px;width:222px;height:34px;background:#d6dde5;border-radius:5px"></div>
<svg style="left:436.5px;top:626.5px" width="10.2" height="10.2" viewBox="0 0 10.2 10.2"><path d="M5.100 0V10.200M0 5.100H10.200" stroke="#2c3e5a" stroke-width="1.800"/></svg>
<div class="a m5" style="top:621.9px;line-height:20px;font-size:12.8px;color:#2c3e5a;letter-spacing:0.076px;left:455.5px;">Dodaj towar lub usługę z listy</div>
</section>
<section class="tabs-card">
<div class="card" style="left:250px;top:676px;width:1064px;height:291px"></div>
<div class="hl" style="left:251px;top:736px;width:1062px"></div>
<div class="b" style="left:267px;top:734px;width:301.500px;height:4.500px;border-radius:2.200px;background:#d6dde5"></div>
<div class="b" style="left:267px;top:734px;width:59px;height:4.500px;border-radius:2.200px;background:#4fa4ef"></div>
<div class="a m5" style="top:697px;line-height:20px;font-size:13px;color:#16243f;letter-spacing:0.328px;left:280.3px;">Biuro</div>
<div class="a m5" style="top:697px;line-height:20px;font-size:13px;color:#42546f;letter-spacing:0.635px;left:338.5px;">Uwagi</div>
<div class="a m5" style="top:697px;line-height:20px;font-size:13px;color:#42546f;letter-spacing:0.406px;left:404px;">Płatności</div>
<div class="a m5" style="top:697px;line-height:20px;font-size:13px;color:#42546f;letter-spacing:0.517px;left:486.6px;">Dodatkowe</div>
<div class="a m4" style="top:797.6px;line-height:34px;font-size:26.5px;color:#14213d;letter-spacing:0.457px;left:464px;">Sprawdzone</div>
<div class="a" style="top:797.6px;line-height:34px;font-size:26.5px;color:#16243f;font-weight:700;letter-spacing:-0.219px;left:624.8px;">Biuro Rachunkowe już za 149 zł</div>
<div class="b" style="left:463.5px;top:857.8px;width:7.600px;height:3.800px;border-radius:1.900px;background:#2f7cc9"></div>
<div class="a" style="top:849.5px;line-height:20px;font-size:13.6px;color:#16243f;letter-spacing:0.074px;left:481.7px;">Przydzielamy księgową.</div>
<div class="b" style="left:463.5px;top:877.3px;width:7.600px;height:3.800px;border-radius:1.900px;background:#2f7cc9"></div>
<div class="a" style="top:869px;line-height:20px;font-size:13.6px;color:#16243f;letter-spacing:-0.051px;left:481.7px;">Reprezentujemy Cię przed US i ZUS.</div>
<div class="b" style="left:463.5px;top:897.1px;width:7.600px;height:3.800px;border-radius:1.900px;background:#2f7cc9"></div>
<div class="a" style="top:888.8px;line-height:20px;font-size:13.6px;color:#16243f;letter-spacing:0.051px;left:481.7px;">Rozliczenie i wysyłka JPK zawsze na czas.</div>
<div class="b" style="left:776px;top:857px;width:160px;height:44px;background:#40a55c;border-radius:6px;box-shadow:0 3px 8px rgba(64,165,92,.22)"></div>
<div class="a" style="top:869.3px;line-height:20px;font-size:14px;color:#fff;font-weight:700;letter-spacing:0.035px;left:800px;">Zleć księgowość</div>
<div class="a" style="top:868.8px;line-height:20px;font-size:13.7px;color:#3a76ba;letter-spacing:0.12px;left:968.3px;">Dowiedz się więcej</div>
<svg style="left:1094.8px;top:875px" width="5" height="8" viewBox="0 0 5 8"><path d="M.800 .700L4.100 4L.800 7.300" fill="none" stroke="#3673b8" stroke-width="1.6" stroke-linecap="round" stroke-linejoin="round"/></svg>
</section>
<section class="summary-card">
<div class="card" style="left:1334px;top:676px;width:330px;height:288px;border-color:#48995e;border-radius:6px;box-shadow:0 5px 24px rgba(30,45,70,.15)"></div>
<div class="hl" style="left:1335px;top:736px;width:328px"></div>
<div class="hl" style="left:1335px;top:863px;width:328px"></div>
<div class="b" style="left:1335px;top:777px;width:328px;height:0;border-top:1px dashed #d3d9e0"></div>
<div class="b" style="left:1335px;top:818px;width:328px;height:0;border-top:1px dashed #d3d9e0"></div>
<div class="a" style="top:695.2px;line-height:22px;font-size:15px;color:#16243f;font-weight:700;letter-spacing:0.11px;left:1364px;">Podsumowanie faktury</div>
<div class="a" style="top:747px;line-height:20px;font-size:13px;color:#42546f;letter-spacing:0.264px;left:1364px;">Razem netto:</div>
<div class="a" style="top:746.2px;line-height:20px;font-size:14.6px;color:#16243f;letter-spacing:0.498px;right:59.702px;">0,00</div>
<div class="a" style="top:788px;line-height:20px;font-size:13px;color:#42546f;letter-spacing:0.542px;left:1364px;">VAT:</div>
<div class="a" style="top:787.2px;line-height:20px;font-size:14.6px;color:#16243f;letter-spacing:0.498px;right:59.702px;">0,00</div>
<div class="a" style="top:831px;line-height:20px;font-size:13px;color:#42546f;letter-spacing:0.319px;left:1364px;">Razem brutto:</div>
<div class="a" style="top:830px;line-height:24px;font-size:17px;color:#16243f;font-weight:700;letter-spacing:0.036px;right:60.164px;">0,00 PLN</div>
<div class="b" style="left:1394px;top:877px;width:209px;height:34px;background:#40a55c;border-radius:5px"></div>
<svg style="left:1459.7px;top:889px" width="13" height="10" viewBox="0 0 13 10"><path d="M1.200 5.200L4.600 8.600L11.800 1.400" fill="none" stroke="#fff" stroke-width="2" stroke-linecap="round" stroke-linejoin="round"/></svg>
<div class="a" style="top:883.9px;line-height:20px;font-size:12.6px;color:#fff;font-weight:700;letter-spacing:-0.066px;left:1479.5px;">Zatwierdź</div>
<div class="b" style="left:1394px;top:916px;width:71px;height:34px;background:#d6dde5;border-radius:5px"></div>
<div class="a m5" style="top:922.9px;line-height:20px;font-size:12.8px;color:#33455f;letter-spacing:0.087px;left:1411.5px;">Anuluj</div>
<div class="b" style="left:1469px;top:916px;width:134px;height:34px;background:#d6dde5;border-radius:5px"></div>
<div class="a m5" style="top:922.9px;line-height:20px;font-size:12.8px;color:#33455f;letter-spacing:0.115px;left:1486px;">Podgląd wydruku</div>
</section>
</main>
<footer>
<div class="a" style="top:1033.8px;line-height:20px;font-size:13.4px;color:#64758d;letter-spacing:0.461px;left:250.5px;">2001-2024 ©</div>
<div class="a" style="top:1033.8px;line-height:20px;font-size:13.2px;color:#3e5170;letter-spacing:-0.147px;left:341px;">IFIRMA SA</div>
<div class="a" style="top:1033.8px;line-height:20px;font-size:13.4px;color:#64758d;letter-spacing:0.181px;left:1158px;">Sesja wygasa za:</div>
<div class="b" style="left:1272.500px;top:1033px;width:49.500px;height:22px;border:1px solid #dfe4e9;border-radius:4px;background:#f8fafb"></div>
<div class="a" style="top:1034px;line-height:20px;font-size:13.8px;color:#16243f;letter-spacing:0.354px;left:1279.3px;">59:39</div>
<div class="a" style="top:1033px;line-height:20px;font-size:13.4px;color:#64758d;letter-spacing:-0.029px;left:1335px;">Konfiguracja (HELLO@MAILGROW.PL)</div>
<div class="a" style="top:1033px;line-height:20px;font-size:13.4px;color:#64758d;letter-spacing:0.367px;left:1585.5px;">Wyloguj się</div>
</footer>
</body></html>
